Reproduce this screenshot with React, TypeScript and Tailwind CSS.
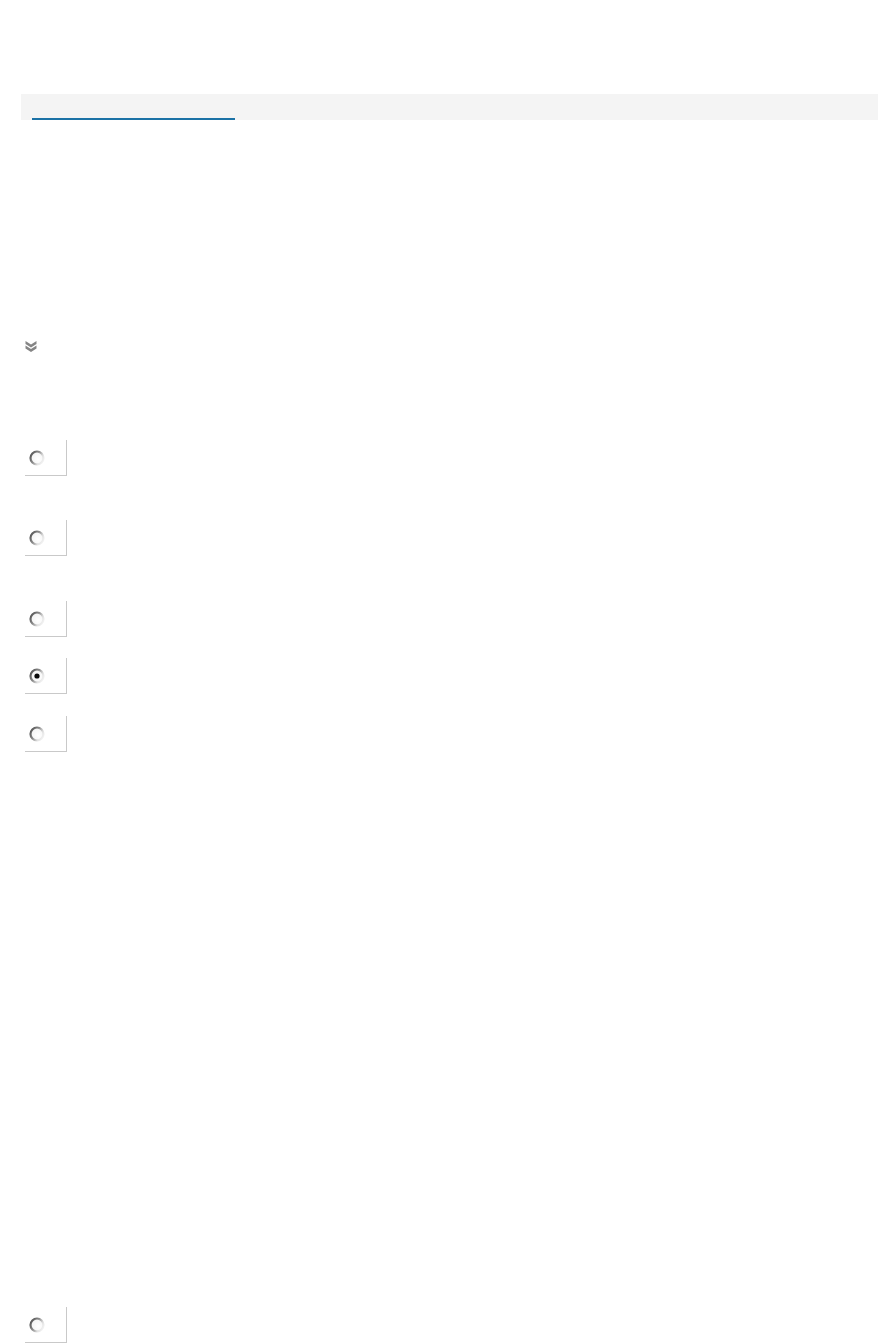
type RadioRow = {
  id: string;
  top: string;
  checked?: boolean;
};

const rows: RadioRow[] = [
  { id: "r1", top: "mt-[87px]" },
  { id: "r2", top: "mt-[44px]" },
  { id: "r3", top: "mt-[45px]" },
  { id: "r4", top: "mt-[21px]", checked: true },
  { id: "r5", top: "mt-[22px]" },
  { id: "r6", top: "mt-[555px]" },
];

function RadioGlyph({ checked, id }: { checked?: boolean; id: string }) {
  return (
    <svg width="18" height="18" viewBox="0 0 18 18" className="block">
      <defs>
        <linearGradient id={`ring-${id}`} x1="0" y1="0.2" x2="1" y2="0.8">
          <stop offset="0%" stopColor="#555555" />
          <stop offset="40%" stopColor="#8a8a8a" />
          <stop offset="75%" stopColor="#e2e2e2" />
          <stop offset="100%" stopColor="#f4f4f4" />
        </linearGradient>
        <radialGradient id={`fill-${id}`} cx="0.6" cy="0.6" r="0.6">
          <stop offset="0%" stopColor="#ffffff" />
          <stop offset="100%" stopColor="#f3f3f3" />
        </radialGradient>
      </defs>
      <circle cx="9" cy="9" r="6.5" fill={`url(#fill-${id})`} stroke={`url(#ring-${id})`} strokeWidth="2.2" />
      {checked ? <circle cx="9" cy="9" r="2.6" fill="#0a0a0a" /> : null}
    </svg>
  );
}

function DoubleChevron() {
  return (
    <svg width="12" height="13" viewBox="0 0 12 13" className="block">
      <path d="M0.5 1 L6 4.6 L11.5 1 L11.5 4 L6 7.6 L0.5 4 Z" fill="#858585" />
      <path d="M0.5 5.4 L6 9 L11.5 5.4 L11.5 8.4 L6 12 L0.5 8.4 Z" fill="#858585" />
    </svg>
  );
}

export default function App() {
  return (
    <div className="min-h-[1343px] w-[878px] bg-white pt-[94px] font-['Liberation_Sans',Arial,sans-serif]">
      <div className="ml-[21px] flex h-[26px] flex-col justify-end bg-[#f4f4f4]">
        <div className="ml-[11px] h-[2px] w-[203px] bg-[#1b72a6]" />
      </div>

      <div className="ml-[25px] mt-[220px]">
        <DoubleChevron />
      </div>

      <div className="flex flex-col">
        {rows.map((row) => (
          <div
            key={row.id}
            className={`${row.top} ml-[25px] flex h-[36px] w-[42px] items-center border-r border-b border-[#c9c9c9] pl-[3px]`}
          >
            <RadioGlyph checked={row.checked} id={row.id} />
          </div>
        ))}
      </div>
    </div>
  );
}
